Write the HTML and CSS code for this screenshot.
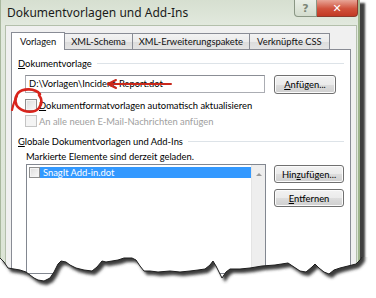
FILE: index.html
```html
<!DOCTYPE html>
<html lang="de">
<head>
<meta charset="utf-8">
<title>Dokumentvorlagen und Add-Ins</title>
<link rel="stylesheet" href="styles.css">
</head>
<body>
<div class="stage">
  <div class="window">
    <div class="titlebar">
      <span class="title">Dokumentvorlagen und Add-Ins</span>
      <div class="caption-btns">
        <span class="cbtn help">?</span>
        <span class="cbtn close">✕</span>
      </div>
    </div>
    <div class="client">
      <div class="tabs">
        <div class="tab active">Vorlagen</div>
        <div class="tab">XML-Schema</div>
        <div class="tab">XML-Erweiterungspakete</div>
        <div class="tab t-last">Verknüpfte CSS</div>
      </div>
      <div class="panel">
        <div class="group"><span><u>D</u>okumentvorlage</span><i class="rule"></i></div>
        <div class="row r-input">
          <div class="input">D:\Vorlagen\Incident-Report.dot</div>
          <span class="btn b-anf"><u>A</u>nfügen...</span>
        </div>
        <div class="check r-c1"><span class="box"></span><span><u>D</u>okumentformatvorlagen automatisch aktualisieren</span></div>
        <div class="check r-c2 disabled"><span class="box"></span><span>An alle neuen E-Mail-Nachrichten anfügen</span></div>
        <div class="group g2"><span><u>G</u>lobale Dokumentvorlagen und Add-Ins</span><i class="rule"></i></div>
        <div class="hint">Markierte Elemente sind derzeit geladen.</div>
        <div class="row r-list">
          <div class="listbox">
            <div class="items">
              <div class="item"><span class="box small"></span><span class="sel">SnagIt Add-in.dot</span></div>
            </div>
            <div class="vscroll"><span class="up"></span></div>
          </div>
          <div class="btncol">
            <span class="btn b-wide">Hin<u>z</u>ufügen...</span>
            <span class="btn b-wide"><u>E</u>ntfernen</span>
          </div>
        </div>
      </div>
    </div>
  </div>

  <svg class="torn" width="376" height="298" viewBox="0 0 376 298">
    <defs>
      <filter id="blur" x="-10%" y="-50%" width="120%" height="200%"><feGaussianBlur stdDeviation="1.6"/></filter>
      <clipPath id="below">
        <path d="M0 258 L4 262 L8 268 L14 269 L20 270 L26 272 L30 275 L34 278 L38 280 L44 281 L50 278 L54 272 L58 264 L61 261 L66 262 L70 265 L76 268 L84 270 L92 271 L97 267 L102 261 L106 262 L112 261 L118 260 L124 258 L128 258 L132 258 L136 260 L140 266 L144 271 L150 271 L158 272 L170 271 L180 272 L190 271 L198 270 L205 269 L210 265 L213 261 L216 266 L219 272 L222 278 L226 272 L230 269 L240 269 L250 268 L262 266 L275 265 L288 263 L294 267 L300 271 L306 272 L312 267 L315 264 L319 268 L324 272 L329 274 L334 270 L340 268 L348 266 L356 264 L360 260 L362 257 L376 257 L376 298 L0 298 Z"/>
      </clipPath>
    </defs>
    <path fill="#ffffff" d="M0 258 L4 262 L8 268 L14 269 L20 270 L26 272 L30 275 L34 278 L38 280 L44 281 L50 278 L54 272 L58 264 L61 261 L66 262 L70 265 L76 268 L84 270 L92 271 L97 267 L102 261 L106 262 L112 261 L118 260 L124 258 L128 258 L132 258 L136 260 L140 266 L144 271 L150 271 L158 272 L170 271 L180 272 L190 271 L198 270 L205 269 L210 265 L213 261 L216 266 L219 272 L222 278 L226 272 L230 269 L240 269 L250 268 L262 266 L275 265 L288 263 L294 267 L300 271 L306 272 L312 267 L315 264 L319 268 L324 272 L329 274 L334 270 L340 268 L348 266 L356 264 L360 260 L362 257 L376 257 L376 298 L0 298 Z"/>
    <g clip-path="url(#below)">
      <path fill="#3a3a3a" filter="url(#blur)" transform="translate(3 4)" d="M-10 0 L0 0 L0 258 L4 262 L8 268 L14 269 L20 270 L26 272 L30 275 L34 278 L38 280 L44 281 L50 278 L54 272 L58 264 L61 261 L66 262 L70 265 L76 268 L84 270 L92 271 L97 267 L102 261 L106 262 L112 261 L118 260 L124 258 L128 258 L132 258 L136 260 L140 266 L144 271 L150 271 L158 272 L170 271 L180 272 L190 271 L198 270 L205 269 L210 265 L213 261 L216 266 L219 272 L222 278 L226 272 L230 269 L240 269 L250 268 L262 266 L275 265 L288 263 L294 267 L300 271 L306 272 L312 267 L315 264 L319 268 L324 272 L329 274 L334 270 L340 268 L348 266 L356 264 L360 260 L362 257 L362 0 Z"/>
    </g>
    <path fill="none" stroke="#1e1e1e" stroke-width="1" d="M0 258 L4 262 L8 268 L14 269 L20 270 L26 272 L30 275 L34 278 L38 280 L44 281 L50 278 L54 272 L58 264 L61 261 L66 262 L70 265 L76 268 L84 270 L92 271 L97 267 L102 261 L106 262 L112 261 L118 260 L124 258 L128 258 L132 258 L136 260 L140 266 L144 271 L150 271 L158 272 L170 271 L180 272 L190 271 L198 270 L205 269 L210 265 L213 261 L216 266 L219 272 L222 278 L226 272 L230 269 L240 269 L250 268 L262 266 L275 265 L288 263 L294 267 L300 271 L306 272 L312 267 L315 264 L319 268 L324 272 L329 274 L334 270 L340 268 L348 266 L356 264 L360 260 L362 257"/>
  </svg>

  <svg class="marks" width="376" height="298" viewBox="0 0 376 298">
    <path fill="none" stroke="#d8241c" stroke-width="2.6" stroke-linecap="round" d="M40 94 C35 88 23 88 18 93 C14 98 15 105 19 108 C25 113 35 113 39 108 C42 104 42 99 39 95"/>
    <path fill="none" stroke="#d8241c" stroke-width="2.2" stroke-linecap="round" d="M17 96 C14 101 13 106 12 110"/>
    <path fill="none" stroke="#c9281c" stroke-width="2" stroke-linecap="round" stroke-linejoin="round" d="M116 80 L108 84 L116 88 M109 84 L171 84"/>
  </svg>
</div>
</body>
</html>
```

FILE: styles.css
```css
* { box-sizing: border-box; }

body {
  margin: 0;
  background: #ffffff;
  font-family: Lato, "Noto Sans", sans-serif;
  font-size: 9.4px;
  color: #000;
}

.stage {
  position: relative;
  width: 376px;
  height: 298px;
  overflow: hidden;
}

.window {
  width: 360px;
  height: 292px;
  display: flex;
  flex-direction: column;
  background: linear-gradient(#d6dfd0, #e2e9de 26px, #dbe4d5);
  border-left: 1px solid #a9b89e;
  border-right: 2px solid #9fb58d;
  box-shadow: 5px 3px 2px rgba(0, 0, 0, 0.75);
}

.titlebar {
  height: 25px;
  flex: none;
  display: flex;
  justify-content: space-between;
  align-items: flex-start;
  padding-left: 6px;
}

.title {
  font-family: "Noto Sans", sans-serif;
  font-size: 12px;
  line-height: 16px;
  margin-top: 5px;
  color: #1a1a1a;
}

.caption-btns {
  display: flex;
}

.cbtn {
  height: 17px;
  display: flex;
  align-items: center;
  justify-content: center;
  border: 1px solid #8a9684;
  border-top: none;
  font-family: "DejaVu Sans", sans-serif;
  font-weight: bold;
}

.help {
  width: 23px;
  border-radius: 0 0 0 4px;
  background: linear-gradient(#e9eee6, #d3dccd);
  color: #7c8677;
  font-size: 11px;
}

.close {
  width: 41px;
  border-radius: 0 0 4px 0;
  border-color: #8d3a2c;
  border-left: none;
  background: linear-gradient(#e8a597, #d0513b 55%, #c23a24);
  color: #ffffff;
  font-size: 11px;
}

.client {
  flex: 1;
  margin: 0 1px 0 4px;
  background: #f0f0f0;
  border: 1px solid #b3bfab;
  border-bottom: none;
  padding-top: 6px;
  display: flex;
  flex-direction: column;
}

.tabs {
  display: flex;
  align-items: flex-end;
  height: 18px;
  margin-left: 5px;
  margin-bottom: -1px;
  position: relative;
  z-index: 1;
}

.tab {
  flex: none;
  white-space: nowrap;
  height: 16px;
  margin-bottom: 1px;
  padding: 0 6px;
  display: flex;
  align-items: center;
  border: 1px solid #898c95;
  border-bottom: none;
  border-left: none;
  background: linear-gradient(#f3f3f3, #ebebeb 50%, #dcdcdc 51%, #e4e4e4);
  color: #111;
}

.tab.t-last { padding: 0 7px; }

.tab.active {
  height: 18px;
  margin-bottom: 0;
  border-left: 1px solid #898c95;
  background: #ffffff;
  padding: 0 8px 1px;
}

.panel {
  flex: 1;
  margin: 0 5px;
  background: #ffffff;
  border: 1px solid #898c95;
  padding: 6px 6px 0 6px;
}

.group {
  display: flex;
  align-items: center;
  height: 14px;
  white-space: nowrap;
}

.rule {
  flex: 1;
  height: 1px;
  margin-left: 5px;
  background: #dde3e8;
}

.g2 { margin-top: 6px; }

.row {
  display: flex;
  align-items: flex-start;
  margin-left: 7px;
}

.r-input { margin-top: 5px; }

.input {
  width: 240px;
  height: 18px;
  border: 1px solid #abadb3;
  border-top-color: #8b8e95;
  background: #fff;
  padding-left: 3px;
  line-height: 16px;
  white-space: nowrap;
  overflow: hidden;
}

.btn {
  height: 19px;
  margin-left: 9px;
  display: flex;
  align-items: center;
  justify-content: center;
  border: 1px solid #707070;
  border-radius: 3px;
  background: linear-gradient(#f2f2f2, #ebebeb 50%, #dddddd 51%, #cfcfcf);
  box-shadow: inset 0 0 0 1px #fbfbfb;
  color: #000;
  white-space: nowrap;
}

.b-anf { width: 62px; }
.b-wide { width: 70px; margin-left: 0; }

.check {
  display: flex;
  align-items: center;
  height: 14px;
  margin-left: 7px;
  white-space: nowrap;
}

.r-c1 { margin-top: 4px; }
.r-c2 { margin-top: 2px; }

.box {
  width: 12px;
  height: 12px;
  margin-right: 2px;
  border: 1px solid #8e8f8f;
  background: linear-gradient(135deg, #dcdcdc, #fafafa);
  box-shadow: inset 0 0 0 1px #f4f4f4;
  flex: none;
}

.disabled { color: #a0a0a0; }
.disabled .box {
  border-color: #c4c4c4;
  background: #f4f4f4;
}

.hint {
  margin-top: 2px;
  margin-left: 8px;
  height: 14px;
  line-height: 14px;
}

.r-list {
  margin-left: 8px;
}

.listbox {
  width: 240px;
  height: 110px;
  display: flex;
  border: 1px solid #828790;
  background: #fff;
}

.items {
  flex: 1;
  padding: 2px 0 0 2px;
}

.item {
  display: flex;
  align-items: center;
  height: 11px;
}

.box.small {
  width: 11px;
  height: 11px;
  margin-right: 0;
}

.sel {
  flex: 1;
  height: 11px;
  line-height: 11px;
  background: #3399ff;
  color: #fff;
  padding-left: 3px;
}

.vscroll {
  width: 14px;
  background: #eeeeee;
  border-left: 1px solid #e4e4e4;
  display: flex;
  justify-content: center;
  padding-top: 8px;
}

.up {
  width: 0;
  height: 0;
  border-left: 3px solid transparent;
  border-right: 3px solid transparent;
  border-bottom: 3px solid #9a9a9a;
}

.btncol {
  display: flex;
  flex-direction: column;
  gap: 6px;
  margin-left: 8px;
  margin-top: 1px;
}

.btncol .btn { height: 18px; }

.torn, .marks {
  position: absolute;
  left: 0;
  top: 0;
}
```
